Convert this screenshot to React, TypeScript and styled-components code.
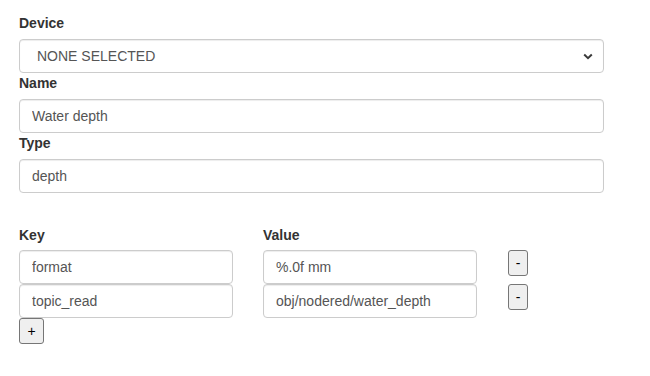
import React from "react";
import styled, { createGlobalStyle } from "styled-components";

const Global = createGlobalStyle`
  html, body { margin: 0; padding: 0; background: #fff; }
  body { font-family: "Liberation Sans", Arial, Helvetica, sans-serif; font-size: 14px; line-height: 20px; color: #333; }
`;

const Page = styled.div`
  padding: 13px 46px 0 19px;
`;

const Label = styled.label`
  display: block;
  font-weight: bold;
  font-size: 14px;
  line-height: 20px;
  margin-bottom: 6px;
  color: #333;
`;

const Input = styled.input`
  box-sizing: border-box;
  display: block;
  width: 100%;
  height: 34px;
  padding: 6px 12px;
  font-family: "Liberation Sans", Arial, Helvetica, sans-serif;
  font-size: 14px;
  color: #555;
  background: #fff;
  border: 1px solid #ccc;
  border-radius: 4px;
  box-shadow: inset 0 1px 1px rgba(0,0,0,0.075);
  outline: none;
`;

const SelectBox = styled.div`
  box-sizing: border-box;
  height: 34px;
  display: flex;
  align-items: center;
  justify-content: space-between;
  padding: 0 10px 0 17px;
  font-size: 14px;
  color: #555;
  border: 1px solid #ccc;
  border-radius: 4px;
  background: #fff;
  box-shadow: inset 0 1px 1px rgba(0,0,0,0.075);
`;

const Table = styled.div`
  margin-top: 32px;
  display: grid;
  grid-template-columns: 214px 214px auto;
  column-gap: 30px;
  justify-content: start;
`;

const HeadCell = styled.div`
  font-weight: bold;
  line-height: 20px;
  margin-bottom: 5px;
`;

const BtnCell = styled.div`
  padding-left: 1px;
`;

const SmallButton = styled.button<{ $w: number }>`
  box-sizing: border-box;
  width: ${(p) => p.$w}px;
  height: 26px;
  padding: 0;
  font-family: "Liberation Sans", Arial, Helvetica, sans-serif;
  font-size: 14px;
  color: #000;
  background: #efefef;
  border: 1px solid #767676;
  border-radius: 3px;
  display: flex;
  align-items: center;
  justify-content: center;
`;

const Chevron = () => (
  <svg width="10" height="7" viewBox="0 0 10 7">
    <path d="M1.2 1.5 L5 5.2 L8.8 1.5" fill="none" stroke="#3a3a3a" strokeWidth="2" />
  </svg>
);

const rows = [
  { key: "format", value: "%.0f mm" },
  { key: "topic_read", value: "obj/nodered/water_depth" },
];

export default function App() {
  return (
    <Page>
      <Global />
      <Label>Device</Label>
      <SelectBox>
        <span>NONE SELECTED</span>
        <Chevron />
      </SelectBox>
      <Label>Name</Label>
      <Input defaultValue="Water depth" />
      <Label>Type</Label>
      <Input defaultValue="depth" />
      <Table>
        <HeadCell>Key</HeadCell>
        <HeadCell>Value</HeadCell>
        <div />
        {rows.map((r) => (
          <React.Fragment key={r.key}>
            <Input defaultValue={r.key} />
            <Input defaultValue={r.value} />
            <BtnCell>
              <SmallButton $w={20}>-</SmallButton>
            </BtnCell>
          </React.Fragment>
        ))}
      </Table>
      <SmallButton $w={25}>+</SmallButton>
    </Page>
  );
}
